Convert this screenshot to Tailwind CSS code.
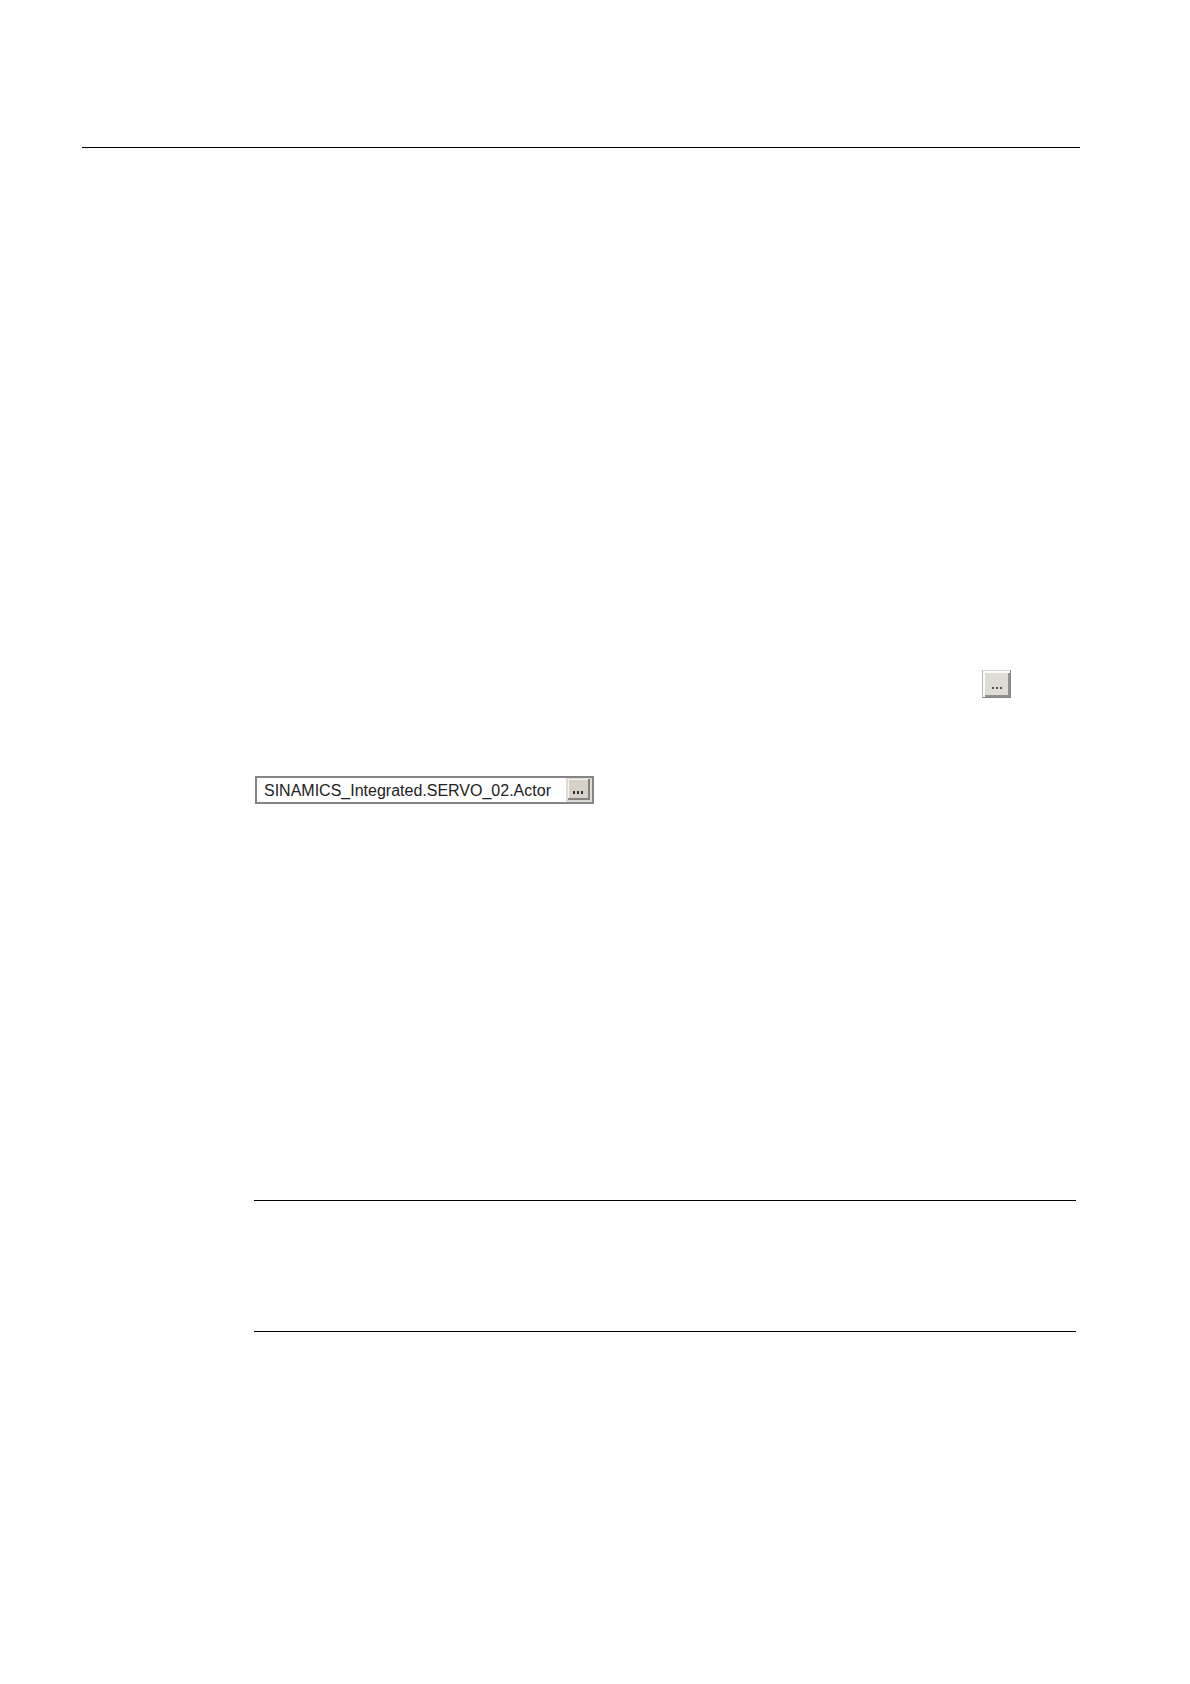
<!DOCTYPE html>
<html lang="en">
<head>
<meta charset="utf-8">
<meta name="viewport" content="width=device-width, initial-scale=1">
<title>Interconnection of the actuator</title>
<script src="https://cdn.jsdelivr.net/npm/@tailwindcss/browser@4"></script>
</head>
<body class="bg-white font-['Liberation_Sans',Arial,sans-serif] text-[#222]">
<main class="flex min-h-screen flex-col pt-[147px] pr-[110px] pl-[82px]">
  <hr class="border-t border-black">
  <div class="mr-1 flex flex-col pl-[172px]">
    <div class="mt-[522px] flex justify-end pr-[65px]">
      <button type="button" aria-label="Open selection" class="flex h-7 w-[29px] items-center justify-center gap-[2px] border border-t-[#d4d3ce] border-r-[#868480] border-b-[#868480] border-l-[#b5b4af] bg-[#dddcd6] pt-2 shadow-[inset_2px_2px_0_#fcfcfa,inset_-2px_-2px_0_#94928c]">
        <span class="size-[2px] bg-[#55534f]"></span>
        <span class="size-[2px] bg-[#55534f]"></span>
        <span class="size-[2px] bg-[#55534f]"></span>
      </button>
    </div>
    <div class="mt-[78px] ml-px flex h-7 w-[339px] items-center border-2 border-[#858585] bg-white">
      <input type="text" aria-label="Actor" value="SINAMICS_Integrated.SERVO_02.Actor" class="h-full min-w-0 flex-1 bg-transparent pt-[2px] pl-[7px] text-base leading-6 outline-none">
      <div class="flex h-full w-[26px] bg-[#dddcd7] pt-px pr-[2px] pb-[2px] pl-[2px]">
        <button type="button" aria-label="Select actor" class="flex h-full w-full items-center justify-center gap-[2px] border-r-2 border-b-2 border-[#85837e] bg-[#d6d2ca] pt-2 shadow-[inset_1px_1px_0_#f5f4f1]">
          <span class="h-[3px] w-[2px] bg-[#33312e]"></span>
          <span class="h-[3px] w-[2px] bg-[#33312e]"></span>
          <span class="h-[3px] w-[2px] bg-[#33312e]"></span>
        </button>
      </div>
    </div>
    <section class="mt-[396px] h-[132px] border-y border-black"></section>
  </div>
</main>
</body>
</html>
